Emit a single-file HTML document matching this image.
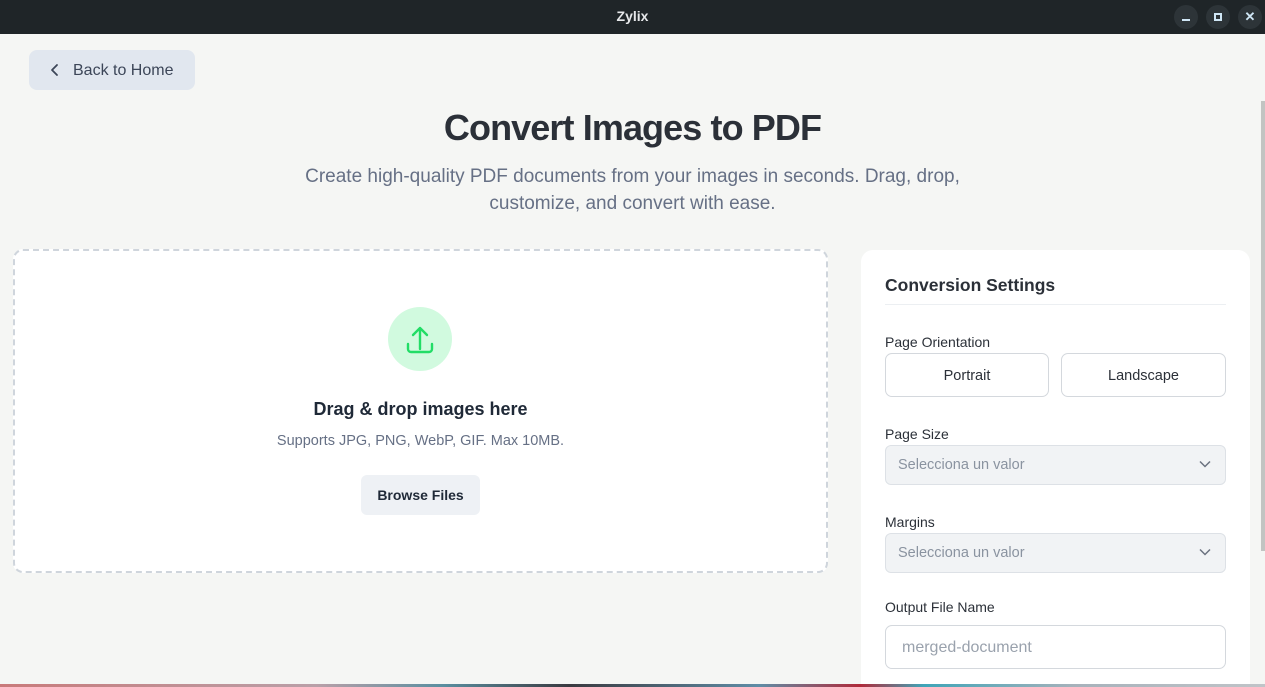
<!DOCTYPE html>
<html><head><meta charset="utf-8"><style>
*{box-sizing:border-box;margin:0;padding:0}
html{width:1265px;height:687px;overflow:hidden}
body{width:1265px;height:687px;overflow:hidden;background:#f5f6f4;font-family:"Liberation Sans",sans-serif;position:relative;color:#1f2937}
.tb{position:absolute;left:0;top:0;width:1265px;height:34px;background:#1f2528;color:#e6e8ea;font-weight:bold;font-size:14px;text-align:center;line-height:33px}
.wb{position:absolute;top:5px;width:24px;height:24px;border-radius:50%;background:#2d3438}
.back{position:absolute;left:29px;top:50px;width:166px;height:40px;background:#e1e7ef;border-radius:8px;font-size:16px;color:#3c4658;line-height:42px;padding-left:44px}
h1{position:absolute;left:0;width:1265px;top:107px;text-align:center;font-size:36px;font-weight:bold;letter-spacing:-0.9px;color:#2b3038}
.sub{position:absolute;left:280px;width:705px;top:163px;text-align:center;font-size:19px;line-height:27px;color:#667085}
.drop{position:absolute;left:13px;top:249px;width:815px;height:324px;border:2px dashed #cfd5dc;border-radius:10px;background:#fff}
.circ{position:absolute;left:373px;top:56px;width:64px;height:64px;border-radius:50%;background:#d1fadf}
.dt{position:absolute;left:0;width:100%;top:148px;text-align:center;font-size:18px;font-weight:bold;color:#1f2937}
.ds{position:absolute;left:0;width:100%;top:182px;text-align:center;font-size:14.5px;color:#667085}
.bf{position:absolute;left:346px;top:224px;width:119px;height:40px;border-radius:6px;background:#eef1f5;font-size:14px;font-weight:bold;text-align:center;line-height:40px;color:#1f2937}
.panel{position:absolute;left:861px;top:250px;width:389px;height:434px;background:#fff;border-radius:12px 12px 0 0}
.ph{position:absolute;left:24px;top:25px;font-size:17.5px;font-weight:bold;color:#2b3038}
.hr{position:absolute;left:24px;top:54px;width:341px;height:1px;background:#eceff2}
.lb{position:absolute;left:24px;font-size:14px;color:#2b3038}
.ob{position:absolute;top:103px;height:44px;border:1px solid #d4d8dd;border-radius:7px;text-align:center;line-height:44px;font-size:14.5px;color:#2b3038}
.sel{position:absolute;left:24px;width:341px;height:40px;border:1px solid #dde1e6;background:#f1f3f5;border-radius:6px;font-size:14.5px;color:#8a93a0;line-height:38px;padding-left:12px}
.sel svg{position:absolute;right:14px;top:14px}
.inp{position:absolute;left:24px;top:375px;width:341px;height:44px;border:1px solid #d4d8dd;border-radius:7px;font-size:16px;color:#9aa2ad;line-height:44px;padding-left:16px}
.sb{position:absolute;left:1261px;top:101px;width:4px;height:450px;background:#c2c4c2}
.wall{position:absolute;left:0;top:684px;width:1265px;height:3px;background:linear-gradient(90deg,#c97a7a,#b9a0a8 25%,#5a8fa0 35%,#3a3a40 45%,#5f8da6 60%,#b02a3a 68%,#3fa5b8 73%,#a7b2bb 85%,#c0c4c8)}
</style></head><body>
<div class="tb">Zylix</div>
<div class="wb" style="left:1174px"><div style="position:absolute;left:8px;top:14px;width:8px;height:2px;background:#cfe6f5"></div></div>
<div class="wb" style="left:1206px"><div style="position:absolute;left:8px;top:8px;width:8px;height:8px;border:2px solid #cfe6f5"></div></div>
<div class="wb" style="left:1238px;color:#cfe6f5;font-size:13px;text-align:center;line-height:24px;font-weight:bold">✕</div>
<div class="back"><svg style="position:absolute;left:20px;top:13px" width="12" height="14" viewBox="0 0 12 14"><path d="M8 2L3 7l5 5" stroke="#3c4658" stroke-width="1.8" fill="none" stroke-linecap="round" stroke-linejoin="round"/></svg>Back to Home</div>
<h1>Convert Images to PDF</h1>
<div class="sub">Create high-quality PDF documents from your images in seconds. Drag, drop, customize, and convert with ease.</div>
<div class="drop">
<div class="circ"><svg width="64" height="64" viewBox="0 0 64 64"><path d="M32 42V21M25 28l7-7 7 7M20 37v5a3 3 0 0 0 3 3h18a3 3 0 0 0 3-3v-5" stroke="#22dd66" stroke-width="2.4" fill="none" stroke-linecap="round" stroke-linejoin="round"/></svg></div>
<div class="dt">Drag &amp; drop images here</div>
<div class="ds">Supports JPG, PNG, WebP, GIF. Max 10MB.</div>
<div class="bf">Browse Files</div>
</div>
<div class="panel">
<div class="ph">Conversion Settings</div><div class="hr"></div>
<div class="lb" style="top:84px">Page Orientation</div>
<div class="ob" style="left:24px;width:164px">Portrait</div>
<div class="ob" style="left:200px;width:165px">Landscape</div>
<div class="lb" style="top:176px">Page Size</div>
<div class="sel" style="top:195px">Selecciona un valor<svg width="12" height="8" viewBox="0 0 12 8"><path d="M1 1.5l5 5 5-5" stroke="#6b7280" stroke-width="1.5" fill="none"/></svg></div>
<div class="lb" style="top:264px">Margins</div>
<div class="sel" style="top:283px">Selecciona un valor<svg width="12" height="8" viewBox="0 0 12 8"><path d="M1 1.5l5 5 5-5" stroke="#6b7280" stroke-width="1.5" fill="none"/></svg></div>
<div class="lb" style="top:349px">Output File Name</div>
<div class="inp">merged-document</div>
</div>
<div class="sb"></div>
<div class="wall"></div>
</body></html>
